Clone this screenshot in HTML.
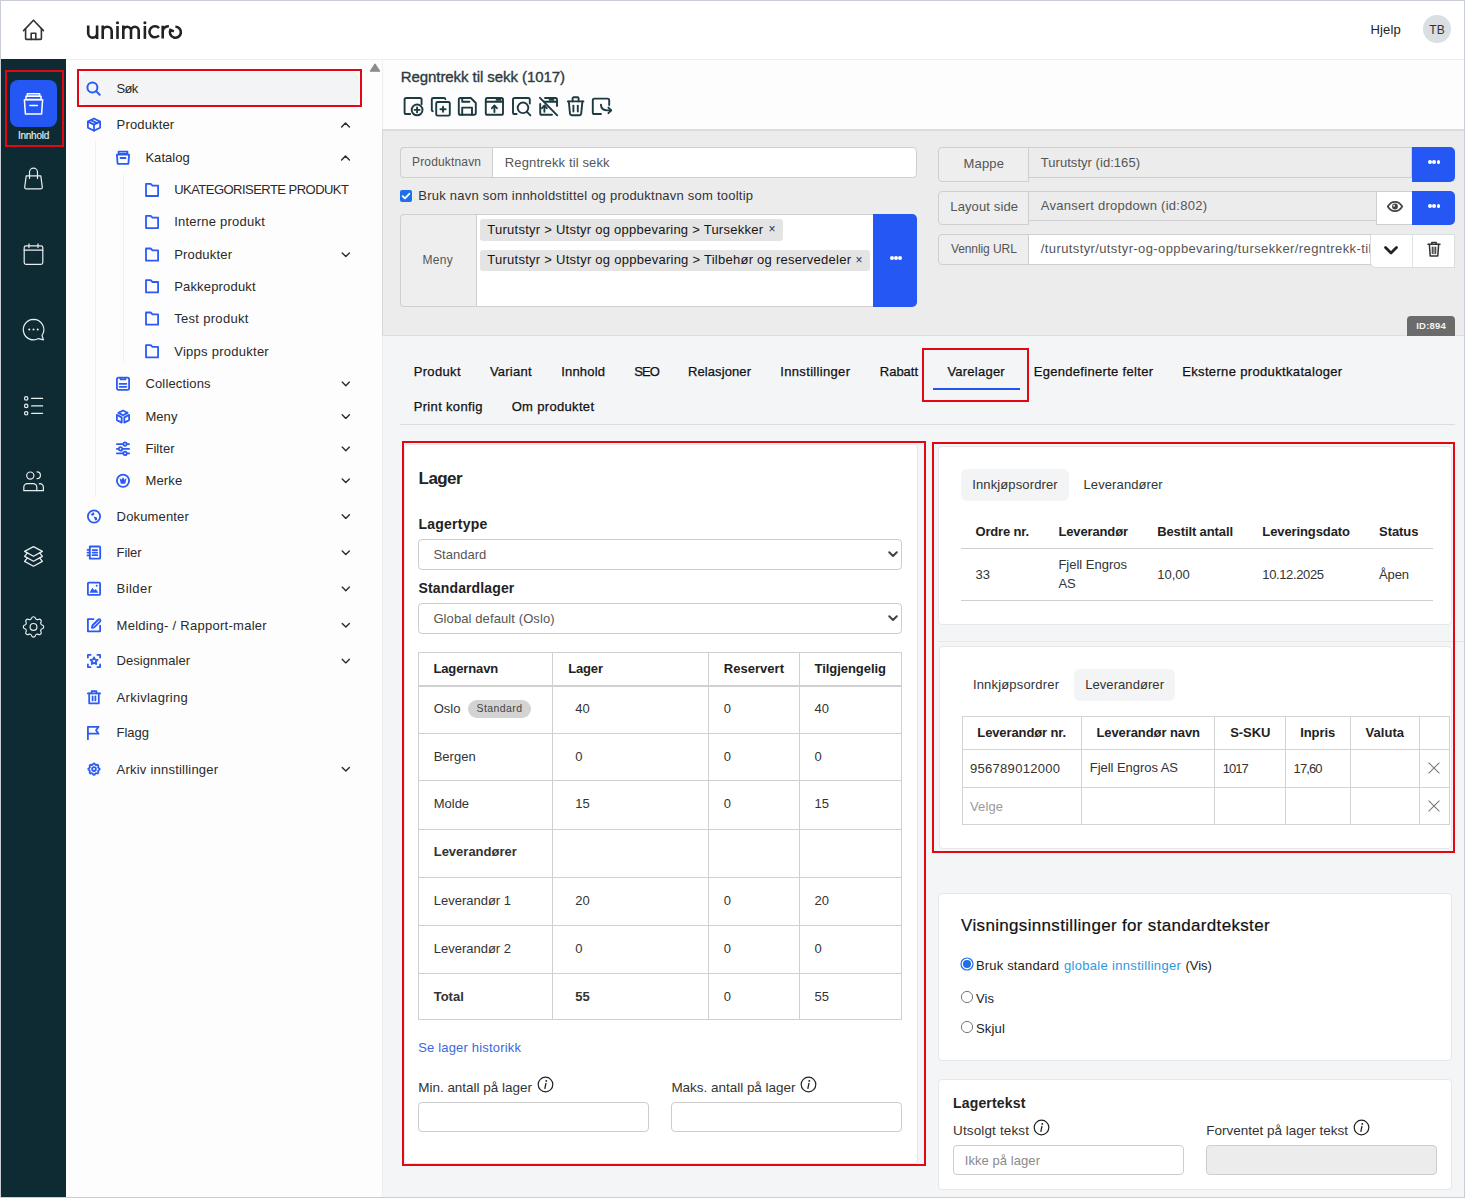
<!DOCTYPE html>
<html><head><meta charset="utf-8"><title>unimicro</title>
<style>
html,body{margin:0;padding:0;}
body{width:1465px;height:1198px;position:relative;overflow:hidden;background:#fff;font-family:"Liberation Sans",sans-serif;}
.a{position:absolute;}
.t{position:absolute;white-space:nowrap;}
svg.a{overflow:visible;}
</style></head><body>
<div class="a" style="left:0px;top:0px;width:1465px;height:59px;background:#fff;"></div>
<div class="a" style="left:66px;top:59px;width:1399px;height:1px;background:#eceef0;"></div>
<svg class="a" style="left:0;top:0" width="200" height="59" viewBox="0 0 200 59" fill="none" stroke="#222" stroke-width="2.6" stroke-linecap="butt"><path d="M88.2 25.4V33.15a4.45 4.45 0 0 0 8.9 0V25.4M97.1 25.4V38.9"/><path d="M102.7 38.9V25.4M102.7 31.2a4.5 4.5 0 0 1 9 0V38.9"/><path d="M117.5 26V38.9"/><circle cx="117.5" cy="22.7" r="1.55" fill="#222" stroke="none"/><path d="M123.3 38.9V25.4M123.3 30.55a3.85 3.85 0 0 1 7.7 0V38.9M131 30.55a3.85 3.85 0 0 1 7.7 0V38.9"/><path d="M144.9 26V38.9"/><circle cx="144.9" cy="22.7" r="1.55" fill="#222" stroke="none"/><path d="M159 28.1A5.5 5.5 0 1 0 159 35.5"/><path d="M162.7 38.6V25.8M162.7 31Q163.6 26.2 168.9 26.2"/><path d="M175.4 26.7A5.5 5.5 0 1 1 170.4 29.9L173.9 31.4"/></svg>
<div class="t " style="left:1370.40px;top:22px;font-size:13px;line-height:16px;color:#222;letter-spacing:0.200px;">Hjelp</div>
<div class="a" style="left:1423px;top:15px;width:28px;height:28px;background:#d9dfe3;border-radius:14px;"></div>
<div class="t " style="left:1429.30px;top:23px;font-size:12px;line-height:14px;color:#333;letter-spacing:0.050px;">TB</div>
<div class="a" style="left:1px;top:59px;width:65px;height:1139px;background:#0e2a32;"></div>
<div class="a" style="left:10px;top:80px;width:47px;height:47px;background:#2557f5;border-radius:8px;"></div>
<div class="t " style="left:18.00px;top:130px;font-size:10px;line-height:12px;color:#e8f0f2;letter-spacing:-0.267px;-webkit-text-stroke:0.15px #e8f0f2;">Innhold</div>
<div class="a" style="left:66px;top:60px;width:316px;height:1137px;background:#fdfdfd;"></div>
<div class="a" style="left:382px;top:60px;width:1px;height:1137px;background:#efefef;"></div>
<svg class="a" style="left:369px;top:62px" width="12" height="11" viewBox="0 0 12 11"><path d="M6 2.2L10.6 9.2H1.4Z" fill="#8c8c8c" stroke="#8c8c8c" stroke-width="1.2" stroke-linejoin="round"/></svg>
<div class="a" style="left:80px;top:72px;width:279px;height:33px;background:#f3f4f6;border-radius:6px;"></div>
<div class="t " style="left:116.60px;top:81px;font-size:13px;line-height:16px;color:#2a2a2a;letter-spacing:-0.675px;">Søk</div>
<div class="a" style="left:95px;top:141px;width:1px;height:356px;background:#eef0f3;"></div>
<div class="a" style="left:123px;top:174px;width:1px;height:189px;background:#eef0f3;"></div>
<div class="t " style="left:116.60px;top:117px;font-size:13px;line-height:16px;color:#2a2a2a;letter-spacing:0.156px;">Produkter</div>
<div class="t " style="left:145.40px;top:150px;font-size:13px;line-height:16px;color:#2a2a2a;letter-spacing:0.050px;">Katalog</div>
<div class="t " style="left:174.20px;top:182px;font-size:13px;line-height:16px;color:#2a2a2a;letter-spacing:-0.529px;">UKATEGORISERTE PRODUKT</div>
<div class="t " style="left:174.20px;top:214px;font-size:13px;line-height:16px;color:#2a2a2a;letter-spacing:0.225px;">Interne produkt</div>
<div class="t " style="left:174.20px;top:247px;font-size:13px;line-height:16px;color:#2a2a2a;letter-spacing:0.181px;">Produkter</div>
<div class="t " style="left:174.20px;top:279px;font-size:13px;line-height:16px;color:#2a2a2a;letter-spacing:0.173px;">Pakkeprodukt</div>
<div class="t " style="left:174.20px;top:311px;font-size:13px;line-height:16px;color:#2a2a2a;letter-spacing:0.309px;">Test produkt</div>
<div class="t " style="left:174.20px;top:344px;font-size:13px;line-height:16px;color:#2a2a2a;letter-spacing:0.264px;">Vipps produkter</div>
<div class="t " style="left:145.40px;top:376px;font-size:13px;line-height:16px;color:#2a2a2a;letter-spacing:0.160px;">Collections</div>
<div class="t " style="left:145.40px;top:409px;font-size:13px;line-height:16px;color:#2a2a2a;letter-spacing:0.067px;">Meny</div>
<div class="t " style="left:145.40px;top:441px;font-size:13px;line-height:16px;color:#2a2a2a;letter-spacing:0.060px;">Filter</div>
<div class="t " style="left:145.40px;top:473px;font-size:13px;line-height:16px;color:#2a2a2a;letter-spacing:0.175px;">Merke</div>
<div class="t " style="left:116.60px;top:509px;font-size:13px;line-height:16px;color:#2a2a2a;letter-spacing:0.156px;">Dokumenter</div>
<div class="t " style="left:116.60px;top:545px;font-size:13px;line-height:16px;color:#2a2a2a;letter-spacing:-0.100px;">Filer</div>
<div class="t " style="left:116.60px;top:581px;font-size:13px;line-height:16px;color:#2a2a2a;letter-spacing:0.430px;">Bilder</div>
<div class="t " style="left:116.60px;top:618px;font-size:13px;line-height:16px;color:#2a2a2a;letter-spacing:0.272px;">Melding- / Rapport-maler</div>
<div class="t " style="left:116.60px;top:653px;font-size:13px;line-height:16px;color:#2a2a2a;letter-spacing:0.045px;">Designmaler</div>
<div class="t " style="left:116.60px;top:690px;font-size:13px;line-height:16px;color:#2a2a2a;letter-spacing:0.291px;">Arkivlagring</div>
<div class="t " style="left:116.60px;top:725px;font-size:13px;line-height:16px;color:#2a2a2a;letter-spacing:-0.025px;">Flagg</div>
<div class="t " style="left:116.60px;top:762px;font-size:13px;line-height:16px;color:#2a2a2a;letter-spacing:0.219px;">Arkiv innstillinger</div>
<div class="a" style="left:383px;top:60px;width:1081px;height:69px;background:#fdfdfd;"></div>
<div class="t " style="left:400.70px;top:68px;font-size:15px;line-height:18px;color:#2c3a3f;letter-spacing:-0.067px;-webkit-text-stroke:0.35px #2c3a3f;">Regntrekk til sekk (1017)</div>
<div class="a" style="left:383px;top:129px;width:1081px;height:207px;background:#ececec;"></div>
<div class="a" style="left:383px;top:129px;width:1081px;height:2px;background:#dcdcdc;"></div>
<div class="a" style="left:382px;top:129px;width:1px;height:207px;background:#d8d8d8;"></div>
<div class="a" style="left:383px;top:335px;width:1081px;height:1px;background:#dddddd;"></div>
<div class="a" style="left:400px;top:147px;width:517px;height:31px;background:#fff;border:1px solid #cfcfcf;border-radius:4px;box-sizing:border-box;"></div>
<div class="a" style="left:400px;top:147px;width:93px;height:31px;background:#eeeeee;border:1px solid #cfcfcf;border-radius:4px 0 0 4px;box-sizing:border-box;"></div>
<div class="t " style="left:412.00px;top:155px;font-size:12px;line-height:14px;color:#555;letter-spacing:0.160px;">Produktnavn</div>
<div class="t " style="left:504.80px;top:155px;font-size:13px;line-height:16px;color:#555;letter-spacing:0.126px;">Regntrekk til sekk</div>
<svg class="a" style="left:400px;top:190px" width="12" height="12" viewBox="0 0 12 12"><rect x="0" y="0" width="12" height="12" rx="2" fill="#1f6fea"/><path d="M2.7 6.2l2.2 2.2l4.4 -4.6" fill="none" stroke="#fff" stroke-width="1.9" stroke-linecap="round" stroke-linejoin="round"/></svg>
<div class="t " style="left:418.30px;top:188px;font-size:13px;line-height:16px;color:#333;letter-spacing:0.230px;">Bruk navn som innholdstittel og produktnavn som tooltip</div>
<div class="a" style="left:400px;top:214px;width:517px;height:93px;background:#fff;border:1px solid #cfcfcf;border-radius:4px;box-sizing:border-box;"></div>
<div class="a" style="left:400px;top:214px;width:77px;height:93px;background:#eeeeee;border:1px solid #cfcfcf;border-radius:4px 0 0 4px;box-sizing:border-box;"></div>
<div class="t " style="left:422.50px;top:253px;font-size:12px;line-height:14px;color:#555;letter-spacing:0.283px;">Meny</div>
<div class="a" style="left:873px;top:214px;width:44px;height:93px;background:#2557f5;border-radius:0 5px 5px 0;"></div>
<div class="a" style="left:890.0px;top:256.2px;width:3.6px;height:3.6px;background:#fff;border-radius:2px;"></div><div class="a" style="left:894.2px;top:256.2px;width:3.6px;height:3.6px;background:#fff;border-radius:2px;"></div><div class="a" style="left:898.4px;top:256.2px;width:3.6px;height:3.6px;background:#fff;border-radius:2px;"></div>
<div class="a" style="left:480px;top:219px;width:303px;height:22px;background:#e4e4e4;border-radius:3px;"></div>
<div class="t " style="left:487.30px;top:222px;font-size:13px;line-height:16px;color:#151515;letter-spacing:0.250px;">Turutstyr &gt; Utstyr og oppbevaring &gt; Tursekker</div>
<div class="t " style="left:768.50px;top:222px;font-size:12px;line-height:14px;color:#333;">×</div>
<div class="a" style="left:480px;top:250px;width:390px;height:21px;background:#e4e4e4;border-radius:3px;"></div>
<div class="t " style="left:487.30px;top:252px;font-size:13px;line-height:16px;color:#151515;letter-spacing:0.258px;">Turutstyr &gt; Utstyr og oppbevaring &gt; Tilbehør og reservedeler</div>
<div class="t " style="left:855.50px;top:253px;font-size:12px;line-height:14px;color:#333;">×</div>
<div class="a" style="left:938px;top:147px;width:91px;height:35px;background:#eeeeee;border:1px solid #cfcfcf;border-radius:4px 0 0 4px;box-sizing:border-box;"></div>
<div class="a" style="left:1028px;top:147px;width:384px;height:31px;background:#ececec;border:1px solid #cfcfcf;box-sizing:border-box;"></div>
<div class="t " style="left:963.60px;top:156px;font-size:13px;line-height:16px;color:#555;letter-spacing:0.162px;">Mappe</div>
<div class="t " style="left:1040.80px;top:155px;font-size:13px;line-height:16px;color:#555;letter-spacing:0.041px;">Turutstyr (id:165)</div>
<div class="a" style="left:1412px;top:147px;width:43px;height:35px;background:#2557f5;border-radius:0 5px 5px 0;"></div>
<div class="a" style="left:1428.2px;top:160.4px;width:3.6px;height:3.6px;background:#fff;border-radius:2px;"></div><div class="a" style="left:1432.4px;top:160.4px;width:3.6px;height:3.6px;background:#fff;border-radius:2px;"></div><div class="a" style="left:1436.6px;top:160.4px;width:3.6px;height:3.6px;background:#fff;border-radius:2px;"></div>
<div class="a" style="left:938px;top:191px;width:91px;height:34px;background:#eeeeee;border:1px solid #cfcfcf;border-radius:4px 0 0 4px;box-sizing:border-box;"></div>
<div class="a" style="left:1028px;top:191px;width:349px;height:30px;background:#ececec;border:1px solid #cfcfcf;box-sizing:border-box;"></div>
<div class="t " style="left:950.30px;top:199px;font-size:13px;line-height:16px;color:#555;letter-spacing:0.120px;">Layout side</div>
<div class="t " style="left:1040.80px;top:198px;font-size:13px;line-height:16px;color:#555;letter-spacing:0.270px;">Avansert dropdown (id:802)</div>
<div class="a" style="left:1376px;top:191px;width:37px;height:34px;background:#fff;border:1px solid #cfcfcf;box-sizing:border-box;border-right:none;"></div>
<svg class="a" style="left:1386px;top:198px" width="18" height="16" viewBox="0 0 18 16"><path d="M1.8 8.5C3.6 5.3 6 3.8 9 3.8s5.4 1.5 7.2 4.7c-1.8 3.2 -4.2 4.7 -7.2 4.7s-5.4 -1.5 -7.2 -4.7z" fill="none" stroke="#444" stroke-width="1.7"/><circle cx="9" cy="8.5" r="2.9" fill="#444"/><circle cx="8.1" cy="7.7" r=".9" fill="#fff"/></svg>
<div class="a" style="left:1412px;top:191px;width:43px;height:34px;background:#2557f5;border-radius:0 5px 5px 0;"></div>
<div class="a" style="left:1428.2px;top:204.4px;width:3.6px;height:3.6px;background:#fff;border-radius:2px;"></div><div class="a" style="left:1432.4px;top:204.4px;width:3.6px;height:3.6px;background:#fff;border-radius:2px;"></div><div class="a" style="left:1436.6px;top:204.4px;width:3.6px;height:3.6px;background:#fff;border-radius:2px;"></div>
<div class="a" style="left:938px;top:234px;width:91px;height:31px;background:#eeeeee;border:1px solid #cfcfcf;border-radius:4px 0 0 4px;box-sizing:border-box;"></div>
<div class="a" style="left:1028px;top:234px;width:344px;height:31px;background:#fff;border:1px solid #cfcfcf;box-sizing:border-box;"></div>
<div class="t " style="left:950.90px;top:242px;font-size:12px;line-height:14px;color:#555;letter-spacing:-0.080px;">Vennlig URL</div>
<div class="t " style="left:1040.80px;top:241px;font-size:13px;line-height:16px;color:#555;"></div>
<div class="a" style="left:1029px;top:235px;width:341px;height:29px;overflow:hidden"><div class="t " style="left:11.80px;top:6px;font-size:13px;line-height:16px;color:#555;letter-spacing:0.388px;">/turutstyr/utstyr-og-oppbevaring/tursekker/regntrekk-til-sekk</div></div>
<div class="a" style="left:1370px;top:234px;width:85px;height:34px;background:#fff;border:1px solid #d8dee2;border-radius:0 0 0 6px;box-sizing:border-box;"></div>
<div class="a" style="left:1412px;top:234px;width:1px;height:34px;background:#dfe3e6;"></div>
<svg class="a" style="left:1382px;top:243px" width="18" height="14" viewBox="0 0 18 14"><path d="M3.5 4.5L9 10L14.5 4.5" fill="none" stroke="#222" stroke-width="2.8" stroke-linecap="round" stroke-linejoin="round"/></svg>
<svg class="a" style="left:1426px;top:240px" width="16" height="18" viewBox="0 0 16 18" fill="none" stroke="#333" stroke-width="1.5" stroke-linecap="round" stroke-linejoin="round"><path d="M2 4.2h12"/><path d="M5.8 4V2.4h4.4V4"/><path d="M3.4 4.6l.8 11.4h7.6l.8 -11.4"/><path d="M6.3 7v6.6M8 7v6.6M9.7 7v6.6" stroke-width="1.1"/></svg>
<div class="a" style="left:1407px;top:316px;width:48px;height:20px;background:#6b6b6b;border-radius:4px 4px 0 0;"></div>
<div class="t " style="left:1416.20px;top:320px;font-size:9.5px;line-height:11px;color:#f4f4f4;font-weight:700;letter-spacing:0.220px;">ID:894</div>
<div class="a" style="left:383px;top:336px;width:1081px;height:861px;background:#f4f5f7;"></div>
<div class="t " style="left:413.70px;top:364px;font-size:13px;line-height:16px;color:#111;letter-spacing:0.333px;font-weight:400;-webkit-text-stroke:0.25px #111;">Produkt</div>
<div class="t " style="left:489.90px;top:364px;font-size:13px;line-height:16px;color:#111;letter-spacing:0.233px;font-weight:400;-webkit-text-stroke:0.25px #111;">Variant</div>
<div class="t " style="left:561.20px;top:364px;font-size:13px;line-height:16px;color:#111;letter-spacing:0.192px;font-weight:400;-webkit-text-stroke:0.25px #111;">Innhold</div>
<div class="t " style="left:634.30px;top:364px;font-size:13px;line-height:16px;color:#111;letter-spacing:-1.000px;font-weight:400;-webkit-text-stroke:0.25px #111;">SEO</div>
<div class="t " style="left:688.00px;top:364px;font-size:13px;line-height:16px;color:#111;letter-spacing:0.094px;font-weight:400;-webkit-text-stroke:0.25px #111;">Relasjoner</div>
<div class="t " style="left:780.30px;top:364px;font-size:13px;line-height:16px;color:#111;letter-spacing:0.329px;font-weight:400;-webkit-text-stroke:0.25px #111;">Innstillinger</div>
<div class="t " style="left:879.80px;top:364px;font-size:13px;line-height:16px;color:#111;letter-spacing:-0.020px;font-weight:400;-webkit-text-stroke:0.25px #111;">Rabatt</div>
<div class="t " style="left:947.40px;top:364px;font-size:13px;line-height:16px;color:#111;letter-spacing:0.238px;font-weight:400;-webkit-text-stroke:0.25px #111;">Varelager</div>
<div class="t " style="left:1033.70px;top:364px;font-size:13px;line-height:16px;color:#111;letter-spacing:0.308px;font-weight:400;-webkit-text-stroke:0.25px #111;">Egendefinerte felter</div>
<div class="t " style="left:1182.20px;top:364px;font-size:13px;line-height:16px;color:#111;letter-spacing:0.344px;font-weight:400;-webkit-text-stroke:0.25px #111;">Eksterne produktkataloger</div>
<div class="t " style="left:413.70px;top:399px;font-size:13px;line-height:16px;color:#111;letter-spacing:0.332px;-webkit-text-stroke:0.25px #111;">Print konfig</div>
<div class="t " style="left:511.70px;top:399px;font-size:13px;line-height:16px;color:#111;letter-spacing:0.323px;-webkit-text-stroke:0.25px #111;">Om produktet</div>
<div class="a" style="left:933px;top:388px;width:87px;height:2px;background:#2453f0;"></div>
<div class="a" style="left:400px;top:424px;width:1055px;height:1px;background:#dcdde0;"></div>
<div class="a" style="left:404px;top:444px;width:514px;height:720px;background:#fff;border:1px solid #e6e7e9;border-radius:4px;box-sizing:border-box;"></div>
<div class="t " style="left:418.60px;top:469px;font-size:17px;line-height:20px;color:#222;font-weight:700;letter-spacing:-0.575px;">Lager</div>
<div class="t " style="left:418.60px;top:516px;font-size:14px;line-height:17px;color:#222;font-weight:700;letter-spacing:0.212px;">Lagertype</div>
<div class="a" style="left:418px;top:539px;width:484px;height:31px;background:#fff;border:1px solid #cdcdcd;border-radius:4px;box-sizing:border-box;top:539px;"></div>
<div class="t " style="left:433.40px;top:547px;font-size:13px;line-height:16px;color:#555;letter-spacing:0.021px;">Standard</div>
<svg class="a" style="left:887px;top:548px" width="12" height="12" viewBox="0 0 12 12"><path d="M2.2 4.2l3.8 3.8l3.8 -3.8" fill="none" stroke="#444" stroke-width="2" stroke-linecap="round" stroke-linejoin="round"/></svg>
<div class="t " style="left:418.60px;top:580px;font-size:14px;line-height:17px;color:#222;font-weight:700;letter-spacing:0.129px;">Standardlager</div>
<div class="a" style="left:418px;top:539px;width:484px;height:31px;background:#fff;border:1px solid #cdcdcd;border-radius:4px;box-sizing:border-box;top:603px;"></div>
<div class="t " style="left:433.40px;top:611px;font-size:13px;line-height:16px;color:#555;letter-spacing:0.100px;">Global default (Oslo)</div>
<svg class="a" style="left:887px;top:612px" width="12" height="12" viewBox="0 0 12 12"><path d="M2.2 4.2l3.8 3.8l3.8 -3.8" fill="none" stroke="#444" stroke-width="2" stroke-linecap="round" stroke-linejoin="round"/></svg>
<div class="a" style="left:418px;top:652px;width:484px;height:368px;background:#fff;border:1px solid #d0d0d0;box-sizing:border-box;"></div>
<div class="a" style="left:418px;top:686px;width:484px;height:1px;background:#d0d0d0;"></div>
<div class="a" style="left:418px;top:733px;width:484px;height:1px;background:#d0d0d0;"></div>
<div class="a" style="left:418px;top:780px;width:484px;height:1px;background:#d0d0d0;"></div>
<div class="a" style="left:418px;top:829px;width:484px;height:1px;background:#d0d0d0;"></div>
<div class="a" style="left:418px;top:877px;width:484px;height:1px;background:#d0d0d0;"></div>
<div class="a" style="left:418px;top:925px;width:484px;height:1px;background:#d0d0d0;"></div>
<div class="a" style="left:418px;top:973px;width:484px;height:1px;background:#d0d0d0;"></div>
<div class="a" style="left:418px;top:685px;width:484px;height:2px;background:#d0d0d0;"></div>
<div class="a" style="left:552px;top:652px;width:1px;height:368px;background:#d0d0d0;"></div>
<div class="a" style="left:708px;top:652px;width:1px;height:368px;background:#d0d0d0;"></div>
<div class="a" style="left:799px;top:652px;width:1px;height:368px;background:#d0d0d0;"></div>
<div class="t " style="left:433.40px;top:661px;font-size:13px;line-height:16px;color:#222;font-weight:700;letter-spacing:-0.106px;">Lagernavn</div>
<div class="t " style="left:568.20px;top:661px;font-size:13px;line-height:16px;color:#222;font-weight:700;letter-spacing:-0.150px;">Lager</div>
<div class="t " style="left:723.80px;top:661px;font-size:13px;line-height:16px;color:#222;font-weight:700;letter-spacing:0.025px;">Reservert</div>
<div class="t " style="left:814.50px;top:661px;font-size:13px;line-height:16px;color:#222;font-weight:700;letter-spacing:-0.045px;">Tilgjengelig</div>
<div class="t " style="left:433.70px;top:701px;font-size:13px;line-height:16px;color:#333;">Oslo</div>
<div class="t " style="left:575.20px;top:701px;font-size:13px;line-height:16px;color:#333;">40</div>
<div class="t " style="left:723.80px;top:701px;font-size:13px;line-height:16px;color:#333;">0</div>
<div class="t " style="left:814.50px;top:701px;font-size:13px;line-height:16px;color:#333;">40</div>
<div class="t " style="left:433.70px;top:749px;font-size:13px;line-height:16px;color:#333;">Bergen</div>
<div class="t " style="left:575.20px;top:749px;font-size:13px;line-height:16px;color:#333;">0</div>
<div class="t " style="left:723.80px;top:749px;font-size:13px;line-height:16px;color:#333;">0</div>
<div class="t " style="left:814.50px;top:749px;font-size:13px;line-height:16px;color:#333;">0</div>
<div class="t " style="left:433.70px;top:796px;font-size:13px;line-height:16px;color:#333;">Molde</div>
<div class="t " style="left:575.20px;top:796px;font-size:13px;line-height:16px;color:#333;">15</div>
<div class="t " style="left:723.80px;top:796px;font-size:13px;line-height:16px;color:#333;">0</div>
<div class="t " style="left:814.50px;top:796px;font-size:13px;line-height:16px;color:#333;">15</div>
<div class="t " style="left:433.70px;top:844px;font-size:13px;line-height:16px;color:#333;font-weight:700;">Leverandører</div>
<div class="t " style="left:433.70px;top:893px;font-size:13px;line-height:16px;color:#333;">Leverandør 1</div>
<div class="t " style="left:575.20px;top:893px;font-size:13px;line-height:16px;color:#333;">20</div>
<div class="t " style="left:723.80px;top:893px;font-size:13px;line-height:16px;color:#333;">0</div>
<div class="t " style="left:814.50px;top:893px;font-size:13px;line-height:16px;color:#333;">20</div>
<div class="t " style="left:433.70px;top:941px;font-size:13px;line-height:16px;color:#333;">Leverandør 2</div>
<div class="t " style="left:575.20px;top:941px;font-size:13px;line-height:16px;color:#333;">0</div>
<div class="t " style="left:723.80px;top:941px;font-size:13px;line-height:16px;color:#333;">0</div>
<div class="t " style="left:814.50px;top:941px;font-size:13px;line-height:16px;color:#333;">0</div>
<div class="t " style="left:433.70px;top:989px;font-size:13px;line-height:16px;color:#333;font-weight:700;">Total</div>
<div class="t " style="left:575.20px;top:989px;font-size:13px;line-height:16px;color:#333;font-weight:700;">55</div>
<div class="t " style="left:723.80px;top:989px;font-size:13px;line-height:16px;color:#333;">0</div>
<div class="t " style="left:814.50px;top:989px;font-size:13px;line-height:16px;color:#333;">55</div>
<div class="a" style="left:468px;top:700px;width:63px;height:18px;background:#d3d3d3;border-radius:9px;"></div>
<div class="t " style="left:476.50px;top:702px;font-size:10.5px;line-height:13px;color:#444;letter-spacing:0.414px;">Standard</div>
<div class="t " style="left:418.20px;top:1040px;font-size:13px;line-height:16px;color:#3b68e0;letter-spacing:0.179px;">Se lager historikk</div>
<div class="t " style="left:418.20px;top:1080px;font-size:13.5px;line-height:16px;color:#333;letter-spacing:-0.013px;">Min. antall på lager</div>
<div class="t " style="left:671.40px;top:1080px;font-size:13.5px;line-height:16px;color:#333;letter-spacing:-0.022px;">Maks. antall på lager</div>
<svg class="a" style="left:536.5px;top:1075.5px" width="17" height="17" viewBox="0 0 17 17"><circle cx="8.5" cy="8.5" r="7.3" fill="none" stroke="#222" stroke-width="1.2"/><circle cx="9.3" cy="4.9" r=".95" fill="#222"/><path d="M8.9 7.3L7.9 12.4" stroke="#222" stroke-width="1.3" stroke-linecap="round"/></svg>
<svg class="a" style="left:799.5px;top:1075.5px" width="17" height="17" viewBox="0 0 17 17"><circle cx="8.5" cy="8.5" r="7.3" fill="none" stroke="#222" stroke-width="1.2"/><circle cx="9.3" cy="4.9" r=".95" fill="#222"/><path d="M8.9 7.3L7.9 12.4" stroke="#222" stroke-width="1.3" stroke-linecap="round"/></svg>
<div class="a" style="left:418px;top:1102px;width:231px;height:30px;background:#fff;border:1px solid #cdcdcd;border-radius:4px;box-sizing:border-box;"></div>
<div class="a" style="left:671px;top:1102px;width:231px;height:30px;background:#fff;border:1px solid #cdcdcd;border-radius:4px;box-sizing:border-box;"></div>
<svg class="a" style="left:0;top:0" width="1465" height="1198" viewBox="0 0 1465 1198"><g transform="translate(87.00 117.60) scale(1)" fill="none" stroke="#2b5bf3" stroke-width="1.800" stroke-linecap="round" stroke-linejoin="round"><path d="M7 0.9L13.1 4V10L7 13.1L0.9 10V4Z"/><path d="M0.9 4L7 7L13.1 4"/><path d="M7 7V13.1"/><path d="M3.9 2.5L10 5.5"/></g><g transform="translate(116.00 150.70) scale(1)" fill="none" stroke="#2b5bf3" stroke-width="1.800" stroke-linecap="round" stroke-linejoin="round"><path d="M2.6 0.9H11.4V3.2H2.6Z"/><path d="M0.9 3.9H13.1L12.4 13.1H1.6Z"/><path d="M4.5 7.3H9.5"/></g><g transform="translate(145.10 182.90) scale(1)" fill="none" stroke="#2b5bf3" stroke-width="1.800" stroke-linecap="round" stroke-linejoin="round"><path d="M0.9 0.9H5.6L7.4 2.7H13V13.1H0.9Z"/></g><g transform="translate(145.10 215.00) scale(1)" fill="none" stroke="#2b5bf3" stroke-width="1.800" stroke-linecap="round" stroke-linejoin="round"><path d="M0.9 0.9H5.6L7.4 2.7H13V13.1H0.9Z"/></g><g transform="translate(145.10 247.60) scale(1)" fill="none" stroke="#2b5bf3" stroke-width="1.800" stroke-linecap="round" stroke-linejoin="round"><path d="M0.9 0.9H5.6L7.4 2.7H13V13.1H0.9Z"/></g><g transform="translate(145.10 279.30) scale(1)" fill="none" stroke="#2b5bf3" stroke-width="1.800" stroke-linecap="round" stroke-linejoin="round"><path d="M0.9 0.9H5.6L7.4 2.7H13V13.1H0.9Z"/></g><g transform="translate(145.10 311.60) scale(1)" fill="none" stroke="#2b5bf3" stroke-width="1.800" stroke-linecap="round" stroke-linejoin="round"><path d="M0.9 0.9H5.6L7.4 2.7H13V13.1H0.9Z"/></g><g transform="translate(145.10 344.20) scale(1)" fill="none" stroke="#2b5bf3" stroke-width="1.800" stroke-linecap="round" stroke-linejoin="round"><path d="M0.9 0.9H5.6L7.4 2.7H13V13.1H0.9Z"/></g><g transform="translate(116.00 376.80) scale(1)" fill="none" stroke="#2b5bf3" stroke-width="1.800" stroke-linecap="round" stroke-linejoin="round"><path d="M2.5 0.9H11.5A1.6 1.6 0 0 1 13.1 2.5V11.5A1.6 1.6 0 0 1 11.5 13.1H2.5A1.6 1.6 0 0 1 0.9 11.5V2.5A1.6 1.6 0 0 1 2.5 0.9Z"/><path d="M4.6 1.2V2.6H9.4V1.2"/><path d="M3.6 7H10.4"/><path d="M3.6 10H10.4"/></g><g transform="translate(116.00 409.50) scale(1)" fill="none" stroke="#2b5bf3" stroke-width="1.800" stroke-linecap="round" stroke-linejoin="round"><path d="M7 1L11.6 3.4L7 5.8L2.4 3.4Z"/><path d="M0.9 5.4L5.7 7.9V13.1L0.9 10.6Z"/><path d="M13.1 5.4L8.3 7.9V13.1L13.1 10.6Z"/></g><g transform="translate(116.00 441.80) scale(1)" fill="none" stroke="#2b5bf3" stroke-width="1.800" stroke-linecap="round" stroke-linejoin="round"><path d="M0.9 2.3H13.1"/><path d="M0.9 7.1H13.1"/><path d="M0.9 11.6H13.1"/><circle cx="9" cy="2.3" r="1.7" fill="#fdfdfd"/><circle cx="4.5" cy="7.1" r="1.7" fill="#fdfdfd"/><circle cx="9" cy="11.6" r="1.7" fill="#fdfdfd"/></g><g transform="translate(116.00 473.70) scale(1)" fill="none" stroke="#2b5bf3" stroke-width="1.800" stroke-linecap="round" stroke-linejoin="round"><circle cx="7" cy="7" r="6.1"/><path d="M3.5 4.2L4.8 10H9.2L10.5 4.2L8.6 6.1L7 3.6L5.4 6.1Z" fill="#2b5bf3" stroke="none"/></g><g transform="translate(87.00 509.50) scale(1)" fill="none" stroke="#2b5bf3" stroke-width="1.800" stroke-linecap="round" stroke-linejoin="round"><circle cx="7" cy="7" r="6.1"/><path d="M3.6 5.4L6.2 2.6L7.6 4.6L6 6.2Z" fill="#2b5bf3" stroke="none"/><path d="M6.6 7L9.8 7.8L10.2 10.4L8.2 11Z" fill="#2b5bf3" stroke="none"/></g><g transform="translate(87.00 545.60) scale(1)" fill="none" stroke="#2b5bf3" stroke-width="1.800" stroke-linecap="round" stroke-linejoin="round"><path d="M2.8 0.9H12.2A1 1 0 0 1 13.2 1.9V12.1A1 1 0 0 1 12.2 13.1H2.8Z"/><path d="M0.5 4.2H2.6"/><path d="M0.5 7H2.6"/><path d="M0.5 9.8H2.6"/><path d="M5.6 4.5H10.2"/><path d="M5.6 7H10.2"/><path d="M5.6 9.6H10.2"/></g><g transform="translate(87.00 581.80) scale(1)" fill="none" stroke="#2b5bf3" stroke-width="1.800" stroke-linecap="round" stroke-linejoin="round"><path d="M1.9 0.9H12.1A1 1 0 0 1 13.1 1.9V12.1A1 1 0 0 1 12.1 13.1H1.9A1 1 0 0 1 0.9 12.1V1.9A1 1 0 0 1 1.9 0.9Z"/><path d="M2.6 11L5.2 6L7.4 8.4L8.8 7.2L11.4 11Z" fill="#2b5bf3" stroke="none"/><circle cx="9.7" cy="4" r="1" fill="#2b5bf3" stroke="none"/></g><g transform="translate(87.00 618.20) scale(1)" fill="none" stroke="#2b5bf3" stroke-width="1.800" stroke-linecap="round" stroke-linejoin="round"><path d="M6.5 0.9H0.9V13.1H13.1V7.5"/><path d="M11.4 1.3A1.3 1.3 0 0 1 13.2 3.1L7.2 9.1L4.9 9.6L5.4 7.3Z"/></g><g transform="translate(87.00 654.00) scale(1)" fill="none" stroke="#2b5bf3" stroke-width="1.800" stroke-linecap="round" stroke-linejoin="round"><path d="M0.9 3.6V0.9H3.6"/><path d="M10.4 0.9H13.1V3.6"/><path d="M13.1 10.4V13.1H10.4"/><path d="M3.6 13.1H0.9V10.4"/><path d="M7 3.4L8.1 5.6L10.5 5.9L8.8 7.6L9.2 10L7 8.9L4.8 10L5.2 7.6L3.5 5.9L5.9 5.6Z"/></g><g transform="translate(87.00 690.20) scale(1)" fill="none" stroke="#2b5bf3" stroke-width="1.800" stroke-linecap="round" stroke-linejoin="round"><path d="M0.9 3.2H13.1"/><path d="M4.6 3.2V1H9.4V3.2"/><path d="M2.2 3.2V13.1H11.8V3.2"/><path d="M5.6 6.2V10.2"/><path d="M8.4 6.2V10.2"/></g><g transform="translate(87.00 725.60) scale(1)" fill="none" stroke="#2b5bf3" stroke-width="1.800" stroke-linecap="round" stroke-linejoin="round"><path d="M0.9 13.6V1.2H11.6L9 4.7L11.6 8.1H0.9"/></g><g transform="translate(87.00 762.10) scale(1)" fill="none" stroke="#2b5bf3" stroke-width="1.800" stroke-linecap="round" stroke-linejoin="round"><g transform="translate(-0.68 -0.68) scale(0.64)"><path stroke-width="2.8" d="M10.325 4.317c.426 -1.756 2.924 -1.756 3.35 0a1.724 1.724 0 0 0 2.573 1.066c1.543 -.94 3.31 .826 2.37 2.37a1.724 1.724 0 0 0 1.065 2.572c1.756 .426 1.756 2.924 0 3.35a1.724 1.724 0 0 0 -1.066 2.573c.94 1.543 -.826 3.31 -2.37 2.37a1.724 1.724 0 0 0 -2.572 1.065c-.426 1.756 -2.924 1.756 -3.35 0a1.724 1.724 0 0 0 -2.573 -1.066c-1.543 .94 -3.31 -.826 -2.37 -2.37a1.724 1.724 0 0 0 -1.065 -2.572c-1.756 -.426 -1.756 -2.924 0 -3.35a1.724 1.724 0 0 0 1.066 -2.573c-.94 -1.543 .826 -3.31 2.37 -2.37c1 .608 2.296 .07 2.572 -1.065z"/><path stroke-width="2.8" d="M9 12a3 3 0 1 0 6 0a3 3 0 0 0 -6 0"/></g></g><g transform="translate(86.50 81.50) scale(1)" fill="none" stroke="#2b5bf3" stroke-width="2.000" stroke-linecap="round" stroke-linejoin="round"><circle cx="5.9" cy="5.9" r="5"/><path d="M9.6 9.6L13.2 13.2"/></g><path d="M341.6 126.90L345.5 122.90L349.4 126.90" fill="none" stroke="#2a2a2a" stroke-width="1.4" stroke-linecap="round" stroke-linejoin="round"/><path d="M341.6 160.00L345.5 156.00L349.4 160.00" fill="none" stroke="#2a2a2a" stroke-width="1.4" stroke-linecap="round" stroke-linejoin="round"/><path d="M342.2 252.90L345.8 256.50L349.4 252.90" fill="none" stroke="#2a2a2a" stroke-width="1.35" stroke-linecap="round" stroke-linejoin="round"/><path d="M342.2 382.10L345.8 385.70L349.4 382.10" fill="none" stroke="#2a2a2a" stroke-width="1.35" stroke-linecap="round" stroke-linejoin="round"/><path d="M342.2 414.80L345.8 418.40L349.4 414.80" fill="none" stroke="#2a2a2a" stroke-width="1.35" stroke-linecap="round" stroke-linejoin="round"/><path d="M342.2 447.10L345.8 450.70L349.4 447.10" fill="none" stroke="#2a2a2a" stroke-width="1.35" stroke-linecap="round" stroke-linejoin="round"/><path d="M342.2 479.00L345.8 482.60L349.4 479.00" fill="none" stroke="#2a2a2a" stroke-width="1.35" stroke-linecap="round" stroke-linejoin="round"/><path d="M342.2 514.80L345.8 518.40L349.4 514.80" fill="none" stroke="#2a2a2a" stroke-width="1.35" stroke-linecap="round" stroke-linejoin="round"/><path d="M342.2 550.90L345.8 554.50L349.4 550.90" fill="none" stroke="#2a2a2a" stroke-width="1.35" stroke-linecap="round" stroke-linejoin="round"/><path d="M342.2 587.10L345.8 590.70L349.4 587.10" fill="none" stroke="#2a2a2a" stroke-width="1.35" stroke-linecap="round" stroke-linejoin="round"/><path d="M342.2 623.50L345.8 627.10L349.4 623.50" fill="none" stroke="#2a2a2a" stroke-width="1.35" stroke-linecap="round" stroke-linejoin="round"/><path d="M342.2 659.30L345.8 662.90L349.4 659.30" fill="none" stroke="#2a2a2a" stroke-width="1.35" stroke-linecap="round" stroke-linejoin="round"/><path d="M342.2 767.40L345.8 771.00L349.4 767.40" fill="none" stroke="#2a2a2a" stroke-width="1.35" stroke-linecap="round" stroke-linejoin="round"/><g fill="none" stroke="#fff" stroke-width="1.5" stroke-linecap="round" stroke-linejoin="round"><path d="M27.3 93.8H39.7V96.3H27.3Z"/><path d="M26 96.3H41V99.6H26Z"/><path d="M24.4 99.8H42.6L41.6 113.9H25.4Z"/><path d="M29.9 105.6H37.3"/></g><g fill="none" stroke="#e8eef0" stroke-width="1.2" stroke-linecap="round" stroke-linejoin="round"><path d="M26.2 175.8H40.8L42.3 187.1A1.6 1.6 0 0 1 40.7 188.9H26.3A1.6 1.6 0 0 1 24.7 187.1Z"/><path d="M29.5 178.4V172.2A4 4 0 0 1 37.5 172.2V178.4"/></g><g fill="none" stroke="#e8eef0" stroke-width="1.2" stroke-linecap="round" stroke-linejoin="round"><path d="M26 245.8H41A1.8 1.8 0 0 1 42.8 247.6V262.6A1.8 1.8 0 0 1 41 264.4H26A1.8 1.8 0 0 1 24.2 262.6V247.6A1.8 1.8 0 0 1 26 245.8Z"/><path d="M24.2 250.2H42.8"/><path d="M29 243.9V247.6"/><path d="M38 243.9V247.6"/></g><g fill="none" stroke="#e8eef0" stroke-width="1.2" stroke-linecap="round" stroke-linejoin="round"><path d="M33.5 319.3A10.3 10.3 0 1 0 38.6 338.6L43.4 339.8L42 335.4A10.3 10.3 0 0 0 33.5 319.3Z"/><path d="M29.2 329.5h.01"/><path d="M33.5 329.5h.01"/><path d="M37.8 329.5h.01"/></g><g fill="#e8eef0"><circle cx="29.3" cy="329.6" r="1"/><circle cx="33.5" cy="329.6" r="1"/><circle cx="37.7" cy="329.6" r="1"/></g><g fill="none" stroke="#e8eef0" stroke-width="1.2" stroke-linecap="round" stroke-linejoin="round"><circle cx="26.2" cy="398.4" r="1.7"/><circle cx="26.2" cy="405.9" r="1.7"/><circle cx="26.2" cy="413.3" r="1.7"/><path d="M31.6 398.4H42.6"/><path d="M31.6 405.9H42.6"/><path d="M31.6 413.3H42.6"/></g><g transform="translate(0 -1)"><g fill="none" stroke="#e8eef0" stroke-width="1.2" stroke-linecap="round" stroke-linejoin="round"><circle cx="30.3" cy="476.6" r="3.6"/><path d="M23.8 491.7V488.2A3.6 3.6 0 0 1 27.4 484.6H33.2A3.6 3.6 0 0 1 36.8 488.2V491.7Z"/><path d="M37 472.8A3.4 3.4 0 0 1 37 479.6"/><path d="M39.2 484.8A3.4 3.4 0 0 1 43.4 488.2V491.7H36.8"/></g></g><g fill="none" stroke="#e8eef0" stroke-width="1.3" stroke-linecap="round" stroke-linejoin="round"><path d="M33.5 546.6L42.4 551.4L33.5 556.3L24.6 551.4Z"/><path d="M27.4 552.9L24.6 556.4L33.5 561.2L42.4 556.4L39.6 552.9"/><path d="M27.4 557.9L24.6 561.4L33.5 566.2L42.4 561.4L39.6 557.9"/></g><g transform="translate(19.94 613.34) scale(1.13)" fill="none" stroke="#e8eef0" stroke-width="1.06" stroke-linecap="round" stroke-linejoin="round"><path d="M10.325 4.317c.426 -1.756 2.924 -1.756 3.35 0a1.724 1.724 0 0 0 2.573 1.066c1.543 -.94 3.31 .826 2.37 2.37a1.724 1.724 0 0 0 1.065 2.572c1.756 .426 1.756 2.924 0 3.35a1.724 1.724 0 0 0 -1.066 2.573c.94 1.543 -.826 3.31 -2.37 2.37a1.724 1.724 0 0 0 -2.572 1.065c-.426 1.756 -2.924 1.756 -3.35 0a1.724 1.724 0 0 0 -2.573 -1.066c-1.543 .94 -3.31 -.826 -2.37 -2.37a1.724 1.724 0 0 0 -1.065 -2.572c-1.756 -.426 -1.756 -2.924 0 -3.35a1.724 1.724 0 0 0 1.066 -2.573c-.94 -1.543 .826 -3.31 2.37 -2.37c1 .608 2.296 .07 2.572 -1.065z"/><path d="M9 12a3 3 0 1 0 6 0a3 3 0 0 0 -6 0"/></g><g fill="none" stroke="#333" stroke-width="1.6" stroke-linecap="round" stroke-linejoin="round"><path d="M23.6 30.6L33.5 20.2L43.4 30.6"/><path d="M25.6 28.8V38.6A0.8 0.8 0 0 0 26.4 39.4H40.6A0.8 0.8 0 0 0 41.4 38.6V28.8"/><path d="M31.2 39.4V33.3H35.8V39.4"/></g><g fill="none" stroke="#1e3a41" stroke-width="1.9" stroke-linecap="round" stroke-linejoin="round"><path d="M410.2 114H406.2A1.6 1.6 0 0 1 404.6 112.4V99.6A1.6 1.6 0 0 1 406.2 98H420A1.6 1.6 0 0 1 421.6 99.6V104.2"/><circle cx="417.1" cy="109.9" r="5.4"/><path d="M417.1 107.4V112.4"/><path d="M414.6 109.9H419.6"/></g><g fill="none" stroke="#1e3a41" stroke-width="1.9" stroke-linecap="round" stroke-linejoin="round"><path d="M432.8 111.2A1.4 1.4 0 0 1 431.8 109.9V99.4A1.4 1.4 0 0 1 433.2 98H444A1.4 1.4 0 0 1 445.4 99.2"/><path d="M437.6 102H448.4A1.4 1.4 0 0 1 449.8 103.4V114.2A1.4 1.4 0 0 1 448.4 115.6H437.6A1.4 1.4 0 0 1 436.2 114.2V103.4A1.4 1.4 0 0 1 437.6 102Z"/><path d="M443 106.6V111.8"/><path d="M440.4 109.2H445.6"/></g><g fill="none" stroke="#1e3a41" stroke-width="1.9" stroke-linecap="round" stroke-linejoin="round"><path d="M460.4 98H470.8L475.8 103V113.2A1.6 1.6 0 0 1 474.2 114.8H460.4A1.6 1.6 0 0 1 458.8 113.2V99.6A1.6 1.6 0 0 1 460.4 98Z"/><path d="M462.2 98V101.8H469.4"/><path d="M462.2 114.8V107.6H472V114.8"/></g><g fill="none" stroke="#1e3a41" stroke-width="1.9" stroke-linecap="round" stroke-linejoin="round"><path d="M487.4 98H501.4A1.6 1.6 0 0 1 503 99.6V113.2A1.6 1.6 0 0 1 501.4 114.8H487.4A1.6 1.6 0 0 1 485.8 113.2V99.6A1.6 1.6 0 0 1 487.4 98Z"/><path d="M485.8 101.8H503"/><path d="M496.6 99.9H500.6"/><path d="M494.4 112V105.8"/><path d="M491.9 108.2L494.4 105.6L496.9 108.2"/></g><g fill="none" stroke="#1e3a41" stroke-width="1.9" stroke-linecap="round" stroke-linejoin="round"><path d="M513 103.6V99.6A1.6 1.6 0 0 1 514.6 98H528.2A1.6 1.6 0 0 1 529.8 99.6V103.6"/><path d="M513 103.6V112.4A1.6 1.6 0 0 0 514.6 114H516.6"/><circle cx="523" cy="107.8" r="5.3"/><path d="M526.8 111.6L530.4 115.4"/></g><g fill="none" stroke="#1e3a41" stroke-width="1.9" stroke-linecap="round" stroke-linejoin="round"><path d="M540.2 104V113.2A1.6 1.6 0 0 0 541.8 114.8H552"/><path d="M545 98H555.4A1.6 1.6 0 0 1 557 99.6V106"/><path d="M544.4 101.8H557"/><path d="M549.6 99.9H553.4"/><path d="M544.4 111.8V105.8"/><path d="M542 108.2L544.4 105.6L546.8 108.2"/><path d="M540 97.8L557.2 115.4"/></g><g fill="none" stroke="#1e3a41" stroke-width="1.9" stroke-linecap="round" stroke-linejoin="round"><path d="M567.8 101.4H583.4"/><path d="M572.6 101.4V98.4A1.2 1.2 0 0 1 573.8 97.2H577.4A1.2 1.2 0 0 1 578.6 98.4V101.4"/><path d="M568.8 101.4L570 113.6A1.8 1.8 0 0 0 571.8 115.2H579.4A1.8 1.8 0 0 0 581.2 113.6L582.4 101.4"/><path d="M573.4 105.6V111.6"/><path d="M577.8 105.6V111.6"/></g><g fill="none" stroke="#1e3a41" stroke-width="1.9" stroke-linecap="round" stroke-linejoin="round"><path d="M601 114H594.4A1.6 1.6 0 0 1 592.8 112.4V100.2A1.6 1.6 0 0 1 594.4 98.6H607.6A1.6 1.6 0 0 1 609.2 100.2V105"/><path d="M600.9 104.6Q601.2 110.4 607.6 110.4H611"/><path d="M608.4 107.6L611.2 110.4L608.4 113.2"/></g></svg>
<div class="a" style="left:938px;top:446px;width:514px;height:179px;background:#fff;border:1px solid #e6e7e9;border-radius:4px;box-sizing:border-box;"></div>
<div class="a" style="left:961px;top:469px;width:108px;height:32px;background:#f3f4f6;border-radius:6px;"></div>
<div class="t " style="left:972.20px;top:477px;font-size:13px;line-height:16px;color:#333;letter-spacing:0.131px;">Innkjøpsordrer</div>
<div class="t " style="left:1083.50px;top:477px;font-size:13px;line-height:16px;color:#333;letter-spacing:0.105px;">Leverandører</div>
<div class="t " style="left:975.50px;top:524px;font-size:13px;line-height:16px;color:#222;font-weight:700;letter-spacing:-0.175px;">Ordre nr.</div>
<div class="t " style="left:1058.40px;top:524px;font-size:13px;line-height:16px;color:#222;font-weight:700;letter-spacing:-0.133px;">Leverandør</div>
<div class="t " style="left:1157.20px;top:524px;font-size:13px;line-height:16px;color:#222;font-weight:700;letter-spacing:-0.115px;">Bestilt antall</div>
<div class="t " style="left:1262.30px;top:524px;font-size:13px;line-height:16px;color:#222;font-weight:700;letter-spacing:-0.096px;">Leveringsdato</div>
<div class="t " style="left:1379.10px;top:524px;font-size:13px;line-height:16px;color:#222;font-weight:700;letter-spacing:-0.070px;">Status</div>
<div class="a" style="left:961px;top:548px;width:472px;height:1px;background:#cfcfcf;"></div>
<div class="t " style="left:975.50px;top:567px;font-size:13px;line-height:16px;color:#333;">33</div>
<div class="t " style="left:1058.40px;top:557px;font-size:13px;line-height:16px;color:#333;">Fjell Engros</div>
<div class="t " style="left:1058.40px;top:576px;font-size:13px;line-height:16px;color:#333;">AS</div>
<div class="t " style="left:1157.20px;top:567px;font-size:13px;line-height:16px;color:#333;">10,00</div>
<div class="t " style="left:1262.30px;top:567px;font-size:13px;line-height:16px;color:#333;letter-spacing:-0.372px;">10.12.2025</div>
<div class="t " style="left:1379.10px;top:567px;font-size:13px;line-height:16px;color:#333;letter-spacing:-0.150px;">Åpen</div>
<div class="a" style="left:961px;top:600px;width:472px;height:1px;background:#cfcfcf;"></div>
<div class="a" style="left:938px;top:641px;width:526px;height:1px;background:#e6e7e9;"></div>
<div class="a" style="left:939px;top:646px;width:513px;height:203px;background:#fff;border:1px solid #e6e7e9;border-radius:4px;box-sizing:border-box;"></div>
<div class="a" style="left:1074px;top:669px;width:101px;height:32px;background:#f3f4f6;border-radius:6px;"></div>
<div class="t " style="left:972.90px;top:677px;font-size:13px;line-height:16px;color:#333;letter-spacing:0.177px;">Innkjøpsordrer</div>
<div class="t " style="left:1085.20px;top:677px;font-size:13px;line-height:16px;color:#333;letter-spacing:0.068px;">Leverandører</div>
<div class="a" style="left:962px;top:716px;width:488px;height:109px;background:#fff;border:1px solid #d3d3d3;box-sizing:border-box;"></div>
<div class="a" style="left:962px;top:749px;width:488px;height:1px;background:#d3d3d3;"></div>
<div class="a" style="left:962px;top:787px;width:488px;height:1px;background:#d3d3d3;"></div>
<div class="a" style="left:1081px;top:716px;width:1px;height:109px;background:#d3d3d3;"></div>
<div class="a" style="left:1214px;top:716px;width:1px;height:109px;background:#d3d3d3;"></div>
<div class="a" style="left:1285px;top:716px;width:1px;height:109px;background:#d3d3d3;"></div>
<div class="a" style="left:1350px;top:716px;width:1px;height:109px;background:#d3d3d3;"></div>
<div class="a" style="left:1419px;top:716px;width:1px;height:109px;background:#d3d3d3;"></div>
<div class="t " style="left:977.30px;top:725px;font-size:13px;line-height:16px;color:#222;font-weight:700;letter-spacing:-0.108px;">Leverandør nr.</div>
<div class="t " style="left:1096.40px;top:725px;font-size:13px;line-height:16px;color:#222;font-weight:700;letter-spacing:-0.082px;">Leverandør navn</div>
<div class="t " style="left:1230.20px;top:725px;font-size:13px;line-height:16px;color:#222;font-weight:700;letter-spacing:-0.062px;">S-SKU</div>
<div class="t " style="left:1300.20px;top:725px;font-size:13px;line-height:16px;color:#222;font-weight:700;letter-spacing:-0.080px;">Inpris</div>
<div class="t " style="left:1365.50px;top:725px;font-size:13px;line-height:16px;color:#222;font-weight:700;letter-spacing:0.060px;">Valuta</div>
<div class="t " style="left:970.00px;top:761px;font-size:13px;line-height:16px;color:#333;letter-spacing:0.295px;">956789012000</div>
<div class="t " style="left:1089.80px;top:760px;font-size:13px;line-height:16px;color:#333;letter-spacing:-0.046px;">Fjell Engros AS</div>
<div class="t " style="left:1222.80px;top:761px;font-size:13px;line-height:16px;color:#333;letter-spacing:-1.000px;">1017</div>
<div class="t " style="left:1293.60px;top:761px;font-size:13px;line-height:16px;color:#333;letter-spacing:-0.912px;">17,60</div>
<div class="t " style="left:970.00px;top:799px;font-size:13px;line-height:16px;color:#9a9a9a;letter-spacing:0.113px;">Velge</div>
<svg class="a" style="left:1427.0px;top:761.3px" width="14" height="14" viewBox="0 0 14 14"><path d="M1.6 1.6l10.8 10.8M12.4 1.6l-10.8 10.8" stroke="#777" stroke-width="1.05"/></svg>
<svg class="a" style="left:1427.0px;top:799.0px" width="14" height="14" viewBox="0 0 14 14"><path d="M1.6 1.6l10.8 10.8M12.4 1.6l-10.8 10.8" stroke="#777" stroke-width="1.05"/></svg>
<div class="a" style="left:938px;top:893px;width:514px;height:168px;background:#fff;border:1px solid #e6e7e9;border-radius:4px;box-sizing:border-box;"></div>
<div class="t " style="left:961.10px;top:916px;font-size:17px;line-height:20px;color:#111;letter-spacing:0.326px;-webkit-text-stroke:0.2px #111;">Visningsinnstillinger for standardtekster</div>
<svg class="a" style="left:960px;top:957px" width="14" height="14" viewBox="0 0 14 14"><circle cx="7" cy="7" r="6" fill="#fff" stroke="#1f6fea" stroke-width="1.2"/><circle cx="7" cy="7" r="4" fill="#1f6fea"/></svg>
<div class="t " style="left:975.90px;top:958px;font-size:13px;line-height:16px;color:#222;letter-spacing:0.179px;">Bruk standard</div>
<div class="t " style="left:1064.00px;top:958px;font-size:13px;line-height:16px;color:#2d9ae0;letter-spacing:0.312px;">globale innstillinger</div>
<div class="t " style="left:1185.50px;top:958px;font-size:13px;line-height:16px;color:#222;letter-spacing:-0.050px;">(Vis)</div>
<svg class="a" style="left:960px;top:990.0px" width="14" height="14" viewBox="0 0 14 14"><circle cx="7" cy="7" r="5.6" fill="#fff" stroke="#777" stroke-width="1"/></svg>
<div class="t " style="left:975.90px;top:991px;font-size:13px;line-height:16px;color:#222;letter-spacing:0.150px;">Vis</div>
<svg class="a" style="left:960px;top:1019.9px" width="14" height="14" viewBox="0 0 14 14"><circle cx="7" cy="7" r="5.6" fill="#fff" stroke="#777" stroke-width="1"/></svg>
<div class="t " style="left:975.90px;top:1021px;font-size:13px;line-height:16px;color:#222;letter-spacing:0.225px;">Skjul</div>
<div class="a" style="left:938px;top:1079px;width:514px;height:111px;background:#fff;border:1px solid #e6e7e9;border-radius:4px;box-sizing:border-box;"></div>
<div class="t " style="left:953.00px;top:1095px;font-size:14px;line-height:17px;color:#222;font-weight:700;letter-spacing:0.167px;">Lagertekst</div>
<div class="t " style="left:953.00px;top:1123px;font-size:13.5px;line-height:16px;color:#333;letter-spacing:0.142px;">Utsolgt tekst</div>
<div class="t " style="left:1206.20px;top:1123px;font-size:13.5px;line-height:16px;color:#333;">Forventet på lager tekst</div>
<svg class="a" style="left:1032.5px;top:1119.0px" width="17" height="17" viewBox="0 0 17 17"><circle cx="8.5" cy="8.5" r="7.3" fill="none" stroke="#222" stroke-width="1.2"/><circle cx="9.3" cy="4.9" r=".95" fill="#222"/><path d="M8.9 7.3L7.9 12.4" stroke="#222" stroke-width="1.3" stroke-linecap="round"/></svg>
<svg class="a" style="left:1352.8px;top:1119.0px" width="17" height="17" viewBox="0 0 17 17"><circle cx="8.5" cy="8.5" r="7.3" fill="none" stroke="#222" stroke-width="1.2"/><circle cx="9.3" cy="4.9" r=".95" fill="#222"/><path d="M8.9 7.3L7.9 12.4" stroke="#222" stroke-width="1.3" stroke-linecap="round"/></svg>
<div class="a" style="left:953px;top:1145px;width:231px;height:30px;background:#fff;border:1px solid #cdcdcd;border-radius:4px;box-sizing:border-box;"></div>
<div class="t " style="left:964.80px;top:1153px;font-size:13px;line-height:16px;color:#8a8a8a;letter-spacing:0.063px;">Ikke på lager</div>
<div class="a" style="left:1206px;top:1145px;width:231px;height:30px;background:#ececec;border:1px solid #cdcdcd;border-radius:4px;box-sizing:border-box;"></div>
<div class="a" style="left:5px;top:70px;width:59px;height:77px;border:2px solid #e30613;box-sizing:border-box;"></div>
<div class="a" style="left:77px;top:69px;width:285px;height:38px;border:2px solid #e30613;box-sizing:border-box;"></div>
<div class="a" style="left:922px;top:348px;width:107px;height:54px;border:2px solid #e30613;box-sizing:border-box;"></div>
<div class="a" style="left:402px;top:441px;width:524px;height:725px;border:2px solid #e30613;box-sizing:border-box;"></div>
<div class="a" style="left:932px;top:442px;width:523px;height:411px;border:2px solid #e30613;box-sizing:border-box;"></div>
<div class="a" style="left:0;top:0;width:1465px;height:1198px;border:1px solid #c9ced6;box-sizing:border-box;"></div>
</body></html>
